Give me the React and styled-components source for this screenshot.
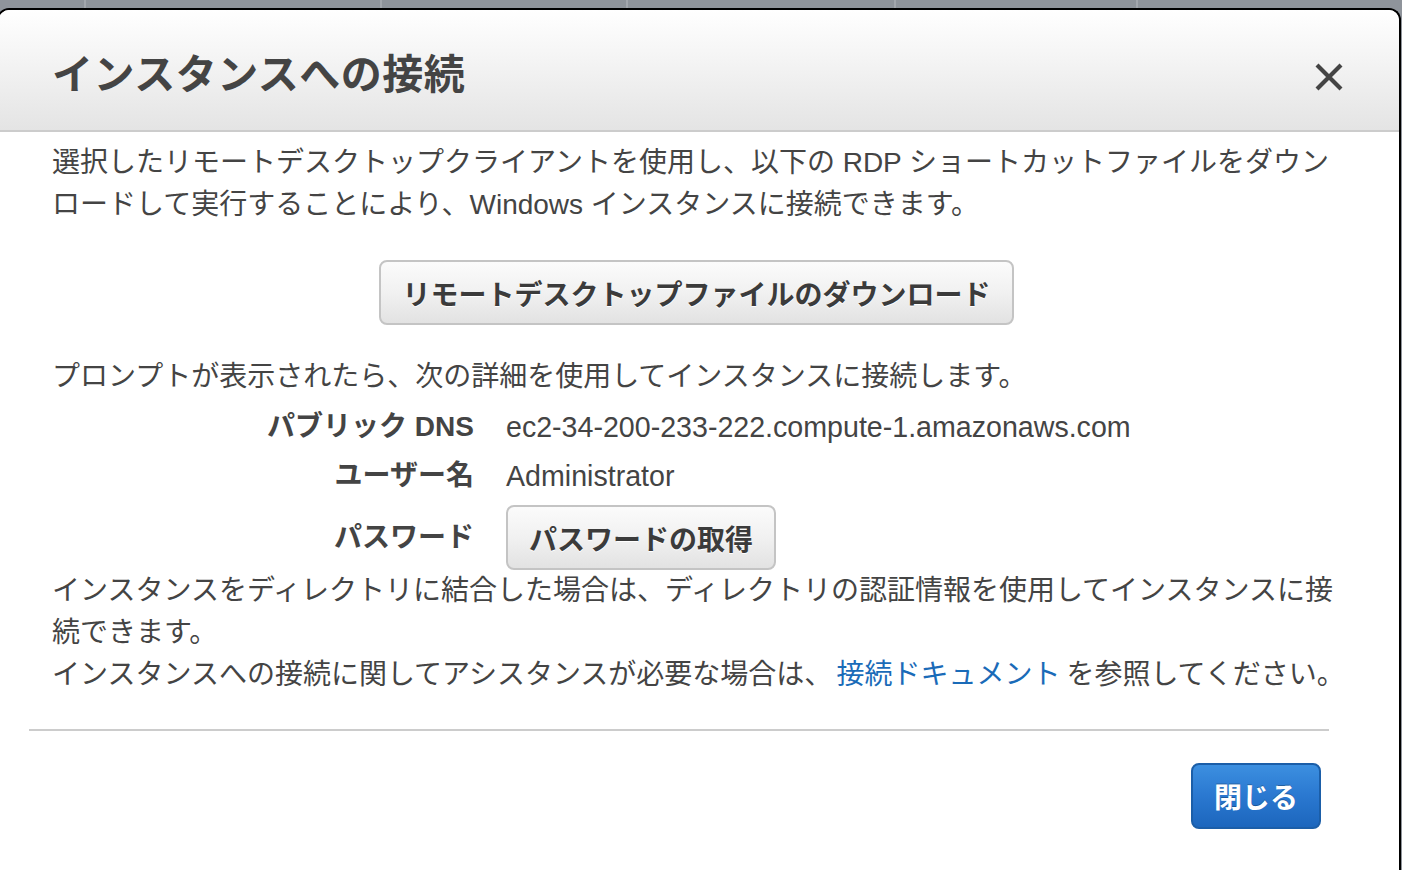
import styled, { createGlobalStyle } from "styled-components";

const GlobalStyle = createGlobalStyle`
  html, body {
    margin: 0;
    padding: 0;
    height: 100%;
    background: #8f949b;
    overflow: hidden;
  }
  #root {
    height: 100%;
  }
  * {
    box-sizing: border-box;
  }
`;

const Page = styled.div`
  height: 100%;
  display: flex;
  flex-direction: column;
  font-family: "Liberation Sans", "Noto Sans CJK JP", sans-serif;
`;

const TabStrip = styled.div`
  height: 8px;
  display: flex;
  flex-shrink: 0;
`;

const Tab = styled.div`
  width: ${(props) => props.w}px;
  border-right: 2px solid #a3a7ad;
  flex-shrink: 0;
  &:last-child {
    flex: 1;
    border-right: none;
  }
`;

const Dialog = styled.div`
  flex: 1;
  margin-left: -3px;
  width: 1404px;
  background: #fff;
  border: 2px solid #000;
  border-bottom: none;
  border-radius: 12px 12px 0 0;
  display: flex;
  flex-direction: column;
  overflow: hidden;
  color: #444;
`;

const Header = styled.div`
  height: 122px;
  flex-shrink: 0;
  display: flex;
  align-items: center;
  justify-content: space-between;
  padding: 2px 55px 0 53px;
  background: linear-gradient(to bottom, #ffffff 0%, #f3f3f3 45%, #e4e4e4 100%);
  border-bottom: 2px solid #cccccc;
`;

const Title = styled.h1`
  margin: 0;
  font-size: 41px;
  font-weight: 700;
  color: #444;
  letter-spacing: 0.5px;
`;

const CloseIcon = styled.button`
  width: 30px;
  height: 30px;
  padding: 0;
  border: none;
  background: none;
  margin-top: 12px;
  cursor: pointer;
  display: flex;
`;

const Body = styled.div`
  padding: 10px 50px 0 53px;
  font-size: 28px;
  line-height: 42px;
`;

const Paragraph = styled.p`
  margin: 0;
`;

const Center = styled.div`
  display: flex;
  justify-content: center;
  margin: 34px 0 31px;
  padding-right: 8px;
`;

const GrayButton = styled.button`
  font-family: inherit;
  font-size: 28px;
  font-weight: 700;
  color: #3b3b3b;
  height: 65px;
  padding: 0 21px;
  border: 2px solid #c4c4c4;
  border-radius: 8px;
  background: linear-gradient(to bottom, #fbfbfb 0%, #f1f1f1 50%, #e2e2e2 100%);
  text-shadow: 0 1px 0 #fff;
  cursor: pointer;
`;

const Details = styled.div`
  display: grid;
  grid-template-columns: 422px auto;
  column-gap: 32px;
  row-gap: 7px;
  margin-top: 8px;
  justify-items: start;
`;

const Label = styled.div`
  justify-self: end;
  font-weight: 700;
  margin-top: ${(props) => props.$offset || 0}px;
`;

const Value = styled.div`
  margin-top: ${(props) => props.$offset || 0}px;
  font-size: 28.6px;
`;

const Link = styled.a`
  color: #1a6bb8;
  text-decoration: none;
  margin: 0 6px 0 4px;
`;

const Divider = styled.hr`
  margin: 33px 0 0 30px;
  width: 1300px;
  border: none;
  border-top: 2px solid #cccccc;
`;

const Footer = styled.div`
  display: flex;
  justify-content: flex-end;
  padding: 32px 0 0;
  width: 1322px;
`;

const PrimaryButton = styled.button`
  font-family: inherit;
  font-size: 28px;
  font-weight: 700;
  color: #fff;
  height: 66px;
  padding: 0 21px;
  border: 2px solid #1b5ea8;
  border-radius: 8px;
  background: linear-gradient(to bottom, #3c8fe0 0%, #2a78d0 50%, #1c66bd 100%);
  text-shadow: 0 -1px 0 rgba(0, 0, 0, 0.25);
  cursor: pointer;
`;

const tabs = [86, 296, 246, 268, 242, 0];

export default function App() {
  return (
    <>
      <GlobalStyle />
      <Page>
        <TabStrip>
          {tabs.map((w, i) => (
            <Tab key={i} w={w} />
          ))}
        </TabStrip>
        <Dialog>
          <Header>
            <Title>インスタンスへの接続</Title>
            <CloseIcon aria-label="閉じる">
              <svg width="30" height="30" viewBox="0 0 30 30">
                <path
                  d="M3 3 L27 27 M27 3 L3 27"
                  stroke="#444"
                  strokeWidth="4.2"
                  strokeLinecap="butt"
                />
              </svg>
            </CloseIcon>
          </Header>
          <Body>
            <Paragraph>
              選択したリモートデスクトップクライアントを使用し、以下の RDP
              ショートカットファイルをダウンロードして実行することにより、Windows
              インスタンスに接続できます。
            </Paragraph>
            <Center>
              <GrayButton>リモートデスクトップファイルのダウンロード</GrayButton>
            </Center>
            <Paragraph>
              プロンプトが表示されたら、次の詳細を使用してインスタンスに接続します。
            </Paragraph>
            <Details>
              <Label>パブリック DNS</Label>
              <Value>ec2-34-200-233-222.compute-1.amazonaws.com</Value>
              <Label>ユーザー名</Label>
              <Value>Administrator</Value>
              <Label $offset={13}>パスワード</Label>
              <Value $offset={1}>
                <GrayButton>パスワードの取得</GrayButton>
              </Value>
            </Details>
            <Paragraph>
              インスタンスをディレクトリに結合した場合は、ディレクトリの認証情報を使用してインスタンスに接続できます。
            </Paragraph>
            <Paragraph>
              インスタンスへの接続に関してアシスタンスが必要な場合は、
              <Link href="#">接続ドキュメント</Link>を参照してください。
            </Paragraph>
          </Body>
          <Divider />
          <Footer>
            <PrimaryButton>閉じる</PrimaryButton>
          </Footer>
        </Dialog>
      </Page>
    </>
  );
}
